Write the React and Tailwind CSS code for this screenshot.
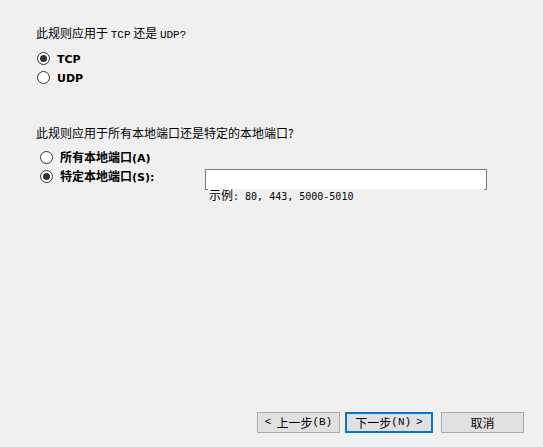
const cjk = "font-['Noto_Sans_CJK_SC',sans-serif]";
const mono = "font-['Liberation_Mono','Noto_Sans_CJK_SC',monospace]";
const digits = "font-['DejaVu_Sans_Mono','Noto_Sans_CJK_SC',monospace]";

function Radio({ checked }) {
  return (
    <span className="flex h-[13px] w-[13px] shrink-0 items-center justify-center rounded-full border border-[#333333] bg-white">
      {checked && <span className="h-[7px] w-[7px] rounded-full bg-[#333333]" />}
    </span>
  );
}

function Option({ checked, children }) {
  return (
    <div className="flex h-[19px] items-center gap-[7px]">
      <Radio checked={checked} />
      <span className="text-[12px] font-bold leading-none text-black">{children}</span>
    </div>
  );
}

function Button({ primary, children }) {
  return (
    <button
      className={
        primary
          ? 'flex h-[21px] w-[88px] items-center justify-center border-2 border-[#0078d7] bg-[#e1e1e1] text-[12px] leading-none text-black'
          : 'flex h-[21px] w-[83px] items-center justify-center border border-[#adadad] bg-[#e1e1e1] text-[12px] leading-none text-black'
      }
    >
      {children}
    </button>
  );
}

export default function App() {
  return (
    <div className={`flex h-[447px] w-full flex-col bg-[#f0f0f0] pl-[36px] pt-[25px] text-black ${cjk}`}>
      <p className="h-[16px] text-[12px] leading-[16px]">
        此规则应用于 <span className={`${mono} text-[11px]`}>TCP</span> 还是 <span className={`${mono} text-[11px]`}>UDP?</span>
      </p>

      <div className="ml-[1px] mt-[8px] font-['DejaVu_Sans',sans-serif]">
        <Option checked><span className="text-[11px]">TCP</span></Option>
        <Option><span className="text-[11px]">UDP</span></Option>
      </div>

      <p className="mt-[38px] h-[16px] text-[12px] leading-[16px]">此规则应用于所有本地端口还是特定的本地端口?</p>

      <div className="ml-[4px] mt-[7px]">
        <Option>
          <span className={cjk}>所有本地端口</span>
          <span className="font-['DejaVu_Sans',sans-serif] text-[11px]">(A)</span>
        </Option>
        <div className="flex items-start">
          <div className="w-[165px]">
            <Option checked>
              <span className={cjk}>特定本地端口</span>
              <span className="font-['DejaVu_Sans',sans-serif] text-[11px]">(S):</span>
            </Option>
          </div>
          <div className="mt-[2px] flex flex-col">
            <div className="h-[21px] w-[282px] border border-[#7a7a7a] bg-white" />
            <div className="relative -mt-[1px] ml-[3px] h-[13px] w-[276px] bg-[#f0f0f0] pl-[1px] text-[12px] leading-[12px]">
              示例<span className={`${digits} text-[10px]`}>: 80, 443, 5000-5010</span>
            </div>
          </div>
        </div>
      </div>

      <div className="mt-auto flex justify-end pb-[14px] pr-[19px]">
        <Button>
          <span className={`${mono} text-[11px]`}>&lt;</span>
          <span className="ml-[5px]">上一步</span>
          <span className={`${mono} text-[11px]`}>(B)</span>
        </Button>
        <div className="ml-[5px]">
          <Button primary>
            <span>下一步</span>
            <span className={`${mono} text-[11px]`}>(N)</span>
            <span className={`${mono} ml-[5px] text-[11px]`}>&gt;</span>
          </Button>
        </div>
        <div className="ml-[8px]">
          <Button>取消</Button>
        </div>
      </div>
    </div>
  );
}
